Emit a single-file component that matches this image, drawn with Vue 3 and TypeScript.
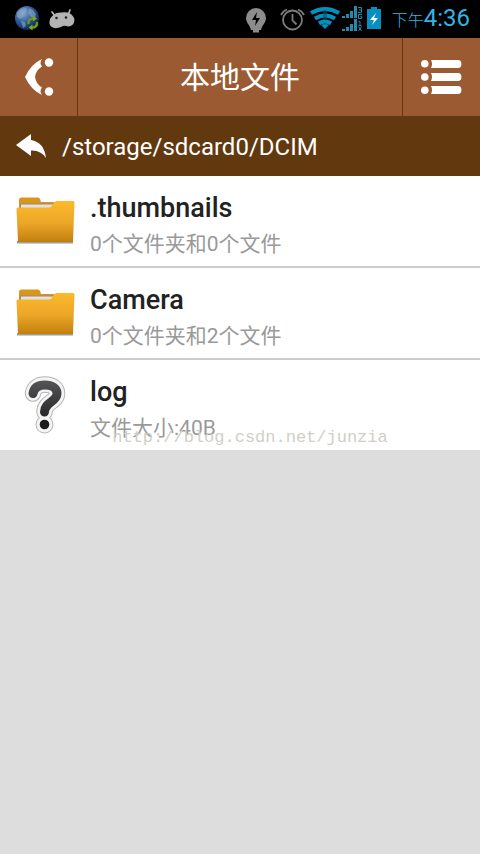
<script setup lang="ts">
interface FileEntry {
  name: string
  detail: string
  kind: 'folder' | 'unknown'
}

const title = '本地文件'
const currentPath = '/storage/sdcard0/DCIM'
const entries: FileEntry[] = [
  { name: '.thumbnails', detail: '0个文件夹和0个文件', kind: 'folder' },
  { name: 'Camera', detail: '0个文件夹和2个文件', kind: 'folder' },
  { name: 'log', detail: '文件大小:40B', kind: 'unknown' },
]
</script>

<template>
  <div class="screen">
    <div class="status">
      <svg class="status-icon" width="26" height="38" viewBox="14 0 26 38" aria-hidden="true">
        <defs>
          <radialGradient id="globe" cx="0.35" cy="0.3" r="0.75">
            <stop offset="0" stop-color="#8aa9cf" />
            <stop offset="0.5" stop-color="#2f5f9f" />
            <stop offset="1" stop-color="#0c2148" />
          </radialGradient>
        </defs>
        <circle cx="27" cy="18" r="12" fill="url(#globe)" />
        <path d="M17 13l4-4 5-1 1 3-3 2-1 4-3 2-3-2zM29 8l4 2 3 4-1 4-4-1-3-4zM21 21l4 1 1 4-3 2z" fill="#8fa8c4" opacity=".6" />
        <path d="M28.500 24a4.500 4.500 0 0 1 5-5.500M37 22a4.500 4.500 0 0 1-5 5.500" fill="none" stroke="#6d9a12" stroke-width="2.500" />
        <path d="M33 15.500l4 3-4 3zM32.500 24.500l-4 3 4 3z" fill="#7bab18" />
      </svg>
      <svg class="status-icon" width="28" height="38" viewBox="49 0 28 38" aria-hidden="true">
        <path d="M53 12l3 4M71 10l-2 5" stroke="#b0b0b0" stroke-width="1.800" stroke-linecap="round" />
        <path d="M55 14.500Q57 12.500 62 12.500Q68 11.500 71 13.500Q75 16 75.500 20Q75 26 69 26.500Q65 25 62 27Q56 29.500 52 26.500Q49 23 51.500 18Q53 16 55 14.500z" fill="#b3b3b3" />
        <circle cx="57.500" cy="18" r="1.300" fill="#222" /><circle cx="67" cy="17.500" r="1.300" fill="#222" />
      </svg>
      <span class="spring"></span>
      <svg class="status-icon" width="137" height="38" viewBox="245 0 137 38" aria-hidden="true">
        <path d="M256 8a10 10 0 0 1 10 10c0 5-4 7-5 12h-10c-1-5-5-7-5-12a10 10 0 0 1 10-10z" fill="#8c8c8c" />
        <path d="M253 30h6v2.500h-6z" fill="#8c8c8c" />
        <path d="M257 12l-5 8h4l-1 6 5-8h-4z" fill="#000" />
        <g fill="none" stroke="#7c7c7c" stroke-width="1.800">
          <circle cx="292.500" cy="20" r="9.500" />
          <path d="M292.500 14v6.500l4 4M281 15q2-4 6-5.500M304 15q-2-4-6-5.500" />
        </g>
        <g fill="none" stroke="#078fc0" stroke-width="4">
          <path d="M311 13q14-8 28 0" />
          <path d="M315 18.500q10-6 20 0" />
          <path d="M319 23.500q6-4 12 0" />
        </g>
        <path d="M321 25q4-2 8 0l-4 4z" fill="#078fc0" />
        <path d="M323 10h4v10h-4z" fill="#04546f" opacity=".55" />
        <path d="M342 16h3v2h-3zM346 14h3v4h-3zM350 11h3v7h-3zM354 6h3v12h-3zM342 29h3v2h-3zM346 27h3v4h-3zM350 24h3v7h-3zM354 19h3v12h-3z" fill="#2788ac" />
        <path d="M358 7.500h3.500v5H358M359 10h2M362 14.500h-3.500v4h3v-2h-1M358.500 21.500h1.500v4M358.500 25.500h3M358.500 26.500l3 4.500M361.500 26.500l-3 4.500" fill="none" stroke="#2788ac" />
        <path d="M371 7h6v2h4v20h-14V9h4z" fill="#078fc0" />
        <path d="M376 13l-6 7h4l-2 5 6-7h-4z" fill="#fff" />
      </svg>
      <span class="time"><span class="period">下午</span>4:36</span>
    </div>

    <header class="header">
      <button class="nav" type="button" aria-label="返回">
        <svg width="30" height="38" viewBox="0 0 30 38" aria-hidden="true">
          <path d="M18 1Q7 6 1 19Q7 32 18 37Q15 33 18 29.500Q12 26 11 19Q12 12 18 8.500Q15 5 18 1z" fill="#fff" />
          <circle cx="25" cy="4.500" r="4.200" fill="#fff" /><circle cx="25" cy="33.500" r="4.200" fill="#fff" />
        </svg>
      </button>
      <h1 class="title">{{ title }}</h1>
      <button class="nav" type="button" aria-label="菜单">
        <svg width="42" height="36" viewBox="0 0 42 36" aria-hidden="true">
          <g fill="#fff">
            <circle cx="3.800" cy="4.800" r="3.800" /><circle cx="3.800" cy="18" r="3.800" /><circle cx="3.800" cy="31.200" r="3.800" />
            <path d="M10 1h27a3 3.500 0 0 1 0 8H10q2-4 0-8zM10 14h27a3 3.500 0 0 1 0 8H10q2-4 0-8zM10 27h27a3 3.500 0 0 1 0 8H10q2-4 0-8z" />
          </g>
        </svg>
      </button>
    </header>

    <button class="path" type="button">
      <svg width="30" height="24" viewBox="0 0 30 24" aria-hidden="true">
        <path d="M0 11L15 0v6Q28 8 30 24Q25 16 15 16.500V22z" fill="#fff" />
      </svg>
      <span>{{ currentPath }}</span>
    </button>

    <main class="files">
      <ul class="list">
        <li v-for="entry in entries" :key="entry.name" class="row">
          <svg v-if="entry.kind === 'folder'" class="icon" width="60" height="60" viewBox="0 0 60 60" aria-hidden="true">
            <defs>
              <linearGradient id="front" x1="0" y1="0" x2="0" y2="1">
                <stop offset="0" stop-color="#fcba2b" />
                <stop offset="0.550" stop-color="#eba628" />
                <stop offset="1" stop-color="#c17f0d" />
              </linearGradient>
            </defs>
            <path d="M2 50h56v2.500H2z" fill="#77746e" opacity=".7" />
            <path d="M4 20V9q0-2.500 2-2.500h17q1.500 0 2 1.500l1 3h14v10z" fill="#d9961b" />
            <path d="M5 12.500h34v6H5z" fill="#918b80" />
            <path d="M6 13.500h32v5H6z" fill="#e5e2dd" />
            <path d="M1.500 18q0-1.500 1.500-1.500h31q2 0 3-2l2-3q1-1.500 3-1.500h16q1.500 0 1.500 1.500L58 51H3z" fill="url(#front)" />
          </svg>
          <svg v-else class="icon" width="60" height="60" viewBox="0 0 60 60" aria-hidden="true">
            <defs>
              <linearGradient id="mark" gradientUnits="userSpaceOnUse" x1="0" y1="6" x2="0" y2="44">
                <stop offset="0" stop-color="#545456" />
                <stop offset="1" stop-color="#242426" />
              </linearGradient>
            </defs>
            <g fill="none" stroke-linecap="round">
              <g stroke="#b5b5b5">
                <path d="M18 18.500C19 12 24 9.500 30 9.500C37 9.500 42 13 42 18.500C42 27 29.500 27 29.500 37" stroke-width="16.500" />
                <circle cx="29.500" cy="49.500" r="9" fill="#b5b5b5" stroke="none" />
              </g>
              <g stroke="#f4f4f4">
                <path d="M18 18.500C19 12 24 9.500 30 9.500C37 9.500 42 13 42 18.500C42 27 29.500 27 29.500 37" stroke-width="14.500" />
                <circle cx="29.500" cy="49.500" r="8" fill="#f4f4f4" stroke="none" />
              </g>
              <path d="M18 18.500C19 12 24 10 30 10C37 10 42 13 42 18.500C42 27 29.500 27 29.500 37" stroke="url(#mark)" stroke-width="9" />
              <circle cx="29.500" cy="49.500" r="4.800" fill="#1c1c1e" />
            </g>
          </svg>
          <div class="text">
            <span class="name">{{ entry.name }}</span>
            <span class="detail">{{ entry.detail }}</span>
          </div>
        </li>
      </ul>
      <span class="watermark">http://blog.csdn.net/junzia</span>
    </main>
  </div>
</template>

<style>
body {
  background: #ddd;
}
</style>

<style scoped>
.screen {
  font-family: Roboto, "Noto Sans CJK SC", sans-serif;
}
.status {
  display: flex;
  align-items: center;
  gap: 8px;
  height: 38px;
  padding: 0 10px 0 14px;
  background: #000;
  color: #33b5e5;
}
.status-icon {
  flex: none;
}
.spring {
  flex: 1;
}
.time {
  padding-left: 2px;
  font-size: 24px;
  line-height: 40px;
  white-space: nowrap;
}
.period {
  font-size: 16px;
  font-weight: 300;
}
button {
  border: 0;
  padding: 0;
  margin: 0;
  font: inherit;
  color: inherit;
  cursor: pointer;
}
.header {
  display: flex;
  height: 78px;
  background: #9b5a31;
  color: #fff;
}
.nav {
  display: flex;
  flex: none;
  align-items: center;
  justify-content: center;
  width: 78px;
  background: none;
}
.nav:first-child {
  border-right: 1px solid #62380f;
}
.nav:last-child {
  border-left: 1px solid #62380f;
}
.title {
  flex: 1;
  margin: 0;
  font-size: 30px;
  font-weight: 400;
  line-height: 80px;
  text-align: center;
}
.path {
  display: flex;
  align-items: center;
  gap: 16px;
  width: 100%;
  height: 60px;
  padding: 0 16px;
  background: #62380f;
  color: #fff;
  font-size: 24px;
  line-height: 30px;
  text-align: left;
}
.path span {
  padding-top: 2px;
}
.files {
  position: relative;
}
.list {
  margin: 0;
  padding: 0;
  list-style: none;
  background: #fff;
}
.row {
  display: flex;
  gap: 15px;
  padding: 15px;
}
.row + .row {
  border-top: 2px solid #ccc;
}
.icon {
  flex: none;
}
.text {
  display: flex;
  flex-direction: column;
  height: 60px;
}
.name {
  color: #222;
  font-size: 27px;
  font-weight: 500;
  line-height: 34px;
}
.detail {
  color: #999;
  font-size: 21px;
  line-height: 38px;
}
.watermark {
  position: absolute;
  right: 0;
  bottom: 0;
  left: 20px;
  color: #cfcfc8;
  font-family: "Liberation Mono", monospace;
  font-size: 17px;
  line-height: 24px;
  text-align: center;
}
</style>
